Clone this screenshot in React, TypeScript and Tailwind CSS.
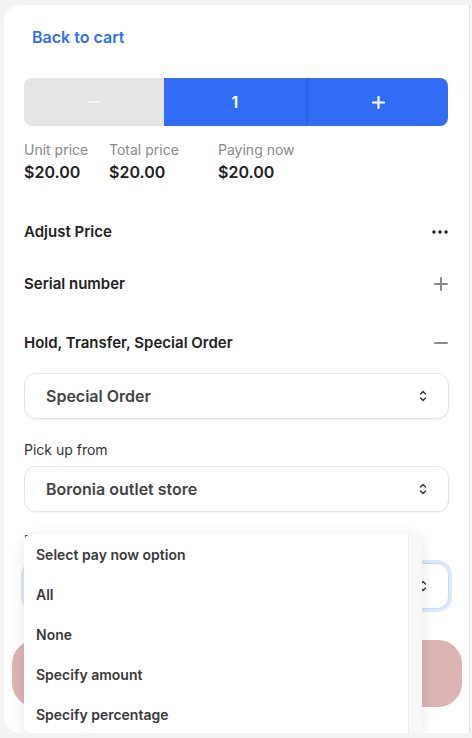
import React from "react";

function Chevrons() {
  return (
    <svg width="10" height="14" viewBox="0 0 10 14" fill="none" stroke="#444" strokeWidth="1.6" strokeLinecap="round" strokeLinejoin="round">
      <path d="M2.5 5 L5 2.5 L7.5 5" />
      <path d="M2.5 9 L5 11.5 L7.5 9" />
    </svg>
  );
}

function SelectBox({ label, focus }: { label: string; focus?: boolean }) {
  return (
    <div
      className={
        "flex h-[46px] items-center justify-between rounded-xl border bg-white pl-[21px] pr-[20px] shadow-[0_1px_2px_rgba(0,0,0,0.06)] " +
        (focus ? "border-[#c9daf6] ring-[3px] ring-[#dbe7fa]" : "border-[#e6e6e6]")
      }
    >
      <span className="text-[16px] font-semibold text-[#444]">{label}</span>
      <Chevrons />
    </div>
  );
}

export default function App() {
  const items = ["Select pay now option", "All", "None", "Specify amount", "Specify percentage"];
  return (
    <div className="h-[738px] w-[472px] overflow-hidden bg-[#f3f3f3] pl-[4px] pt-[5px]" style={{ fontFamily: "Inter, 'Noto Sans', sans-serif" }}>
      <div className="relative h-[728px] w-[466px] overflow-hidden rounded-l-2xl border-r border-[#e2e2e2] bg-white px-5 pt-[20px]">
        <div className="ml-2 text-[16px] font-semibold leading-6 text-[#2f6ff0]">Back to cart</div>

        <div className="mt-[29px] flex h-12 w-[424px] overflow-hidden rounded-lg">
          <div className="flex w-[140px] items-center justify-center bg-[#e5e5e5]">
            <div className="h-[2px] w-[12px] rounded bg-[#f6f6f6]" />
          </div>
          <div className="flex w-[144px] items-center justify-center border-r-2 border-[#2a61de] bg-[#316cf4] text-[16px] font-semibold text-white">
            1
          </div>
          <div className="flex flex-1 items-center justify-center bg-[#316cf4]">
            <svg width="13" height="13" viewBox="0 0 13 13" stroke="white" strokeWidth="2.2" strokeLinecap="round">
              <path d="M6.5 1 V12 M1 6.5 H12" />
            </svg>
          </div>
        </div>

        <div className="mt-[14px] flex">
          <div className="w-[85px]">
            <div className="text-[14px] leading-5 text-[#8a8a8a]">Unit price</div>
            <div className="text-[16px] font-semibold leading-6 text-[#222]">$20.00</div>
          </div>
          <div className="w-[109px]">
            <div className="text-[14px] leading-5 text-[#8a8a8a]">Total price</div>
            <div className="text-[16px] font-semibold leading-6 text-[#222]">$20.00</div>
          </div>
          <div>
            <div className="text-[14px] leading-5 text-[#8a8a8a]">Paying now</div>
            <div className="text-[16px] font-semibold leading-6 text-[#222]">$20.00</div>
          </div>
        </div>

        <div className="mt-[37px] flex items-center justify-between">
          <span className="text-[15px] font-semibold leading-[22px] text-[#222]">Adjust Price</span>
          <svg width="16" height="4" viewBox="0 0 16 4" fill="#222" className="mr-[1px]">
            <circle cx="2" cy="2" r="1.7" />
            <circle cx="8" cy="2" r="1.7" />
            <circle cx="14" cy="2" r="1.7" />
          </svg>
        </div>

        <div className="mt-[30px] flex items-center justify-between">
          <span className="text-[15px] font-semibold leading-[22px] text-[#222]">Serial number</span>
          <svg width="14" height="14" viewBox="0 0 14 14" stroke="#8a8a8a" strokeWidth="2" strokeLinecap="round" className="mr-[1px]">
            <path d="M7 1 V13 M1 7 H13" />
          </svg>
        </div>

        <div className="mt-[37px] flex items-center justify-between">
          <span className="text-[15px] font-semibold leading-[22px] text-[#222]">Hold, Transfer, Special Order</span>
          <svg width="14" height="14" viewBox="0 0 14 14" stroke="#8a8a8a" strokeWidth="2" strokeLinecap="round" className="mr-[1px]">
            <path d="M1 7 H13" />
          </svg>
        </div>

        <div className="mt-[19px]">
          <SelectBox label="Special Order" />
        </div>

        <div className="mt-[21px] text-[14px] leading-5 text-[#333]">Pick up from</div>
        <div className="mt-[6px]">
          <SelectBox label="Boronia outlet store" />
        </div>

        <div className="mt-[19px] text-[14px] leading-5 text-[#333]">Pay now</div>
        <div className="mt-[12px]">
          <SelectBox label="All" focus />
        </div>

        <div className="-ml-3 -mr-[13px] mt-[31px] h-[67px] rounded-3xl bg-[#dcb4b4]" />

        <div className="absolute left-[20px] top-[529px] h-[199px] w-[398px] overflow-hidden rounded-l-lg bg-white shadow-[0_2px_14px_rgba(0,0,0,0.10)]">
          <div className="flex h-full">
            <div className="flex-1 pt-[1px]">
              {items.map((it) => (
                <div key={it} className="h-10 pl-3 text-[14px] font-semibold leading-10 text-[#3a3a3a]">
                  {it}
                </div>
              ))}
            </div>
            <div className="w-[14px] border-l border-[#ececec] bg-[#f8f8f8]" />
          </div>
        </div>
      </div>
    </div>
  );
}
